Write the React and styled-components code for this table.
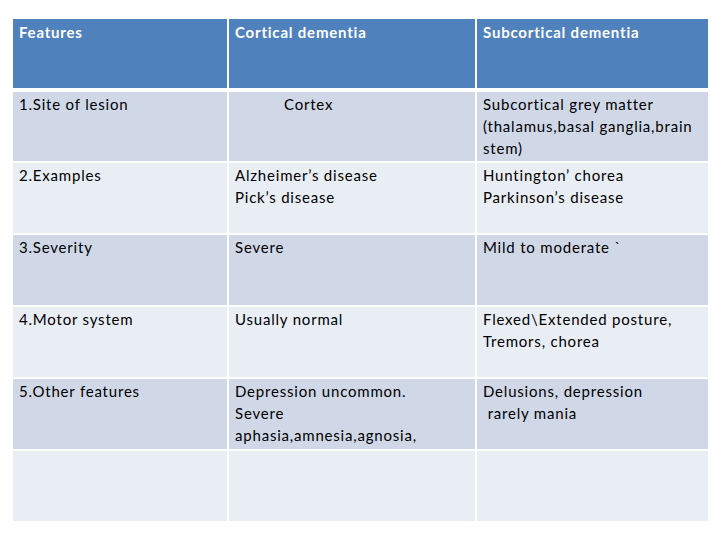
import React from "react";
import styled, { createGlobalStyle } from "styled-components";

const Global = createGlobalStyle`
  html, body { margin: 0; padding: 0; background: #ffffff; }
  body { width: 720px; height: 540px; overflow: hidden; }
`;

const Page = styled.div`
  padding: 19px 13px 0 13px;
  font-family: Lato, "Noto Sans", sans-serif;
  font-size: 15px;
  letter-spacing: 0.8px;
  font-variant-ligatures: none;
  color: #000;
`;

const Grid = styled.div`
  display: grid;
  grid-template-columns: 214px 246px 231px;
  grid-template-rows: 71px 69px repeat(5, 70px);
  column-gap: 2px;
  row-gap: 2px;
  width: 695px;
`;

const HeadCell = styled.div`
  background: #4f81bd;
  color: #ffffff;
  font-weight: 700;
  letter-spacing: 0.8px;
  padding: 2px 6px 0 6px;
  line-height: 22px;
  margin-bottom: 2px;
`;

const Cell = styled.div`
  background: ${(p) => (p.$alt ? "#e9edf4" : "#d0d8e8")};
  padding: 1px 4px 0 ${(p) => p.$indent ?? 6}px;
  line-height: 22px;
  white-space: pre-wrap;
`;

const rows = [
  [["1.Site of lesion"], ["Cortex", 55], ["Subcortical grey matter\n(thalamus,basal ganglia,brain\nstem)"]],
  [["2.Examples"], ["Alzheimer’s disease\nPick’s disease"], ["Huntington’ chorea\nParkinson’s disease"]],
  [["3.Severity"], ["Severe"], ["Mild to moderate `"]],
  [["4.Motor system"], ["Usually normal"], ["Flexed\\Extended posture,\nTremors, chorea"]],
  [["5.Other features"], ["Depression uncommon.\nSevere\naphasia,amnesia,agnosia,"], ["Delusions, depression\n rarely mania"]],
  [[""], [""], [""]],
];

export default function App() {
  return (
    <>
      <Global />
      <Page>
        <Grid>
          <HeadCell>Features</HeadCell>
          <HeadCell>Cortical dementia</HeadCell>
          <HeadCell>Subcortical dementia</HeadCell>
          {rows.map((r, i) =>
            r.map(([text, indent], j) => (
              <Cell key={`${i}-${j}`} $alt={i % 2 === 1} $indent={indent}>
                {text}
              </Cell>
            ))
          )}
        </Grid>
      </Page>
    </>
  );
}
